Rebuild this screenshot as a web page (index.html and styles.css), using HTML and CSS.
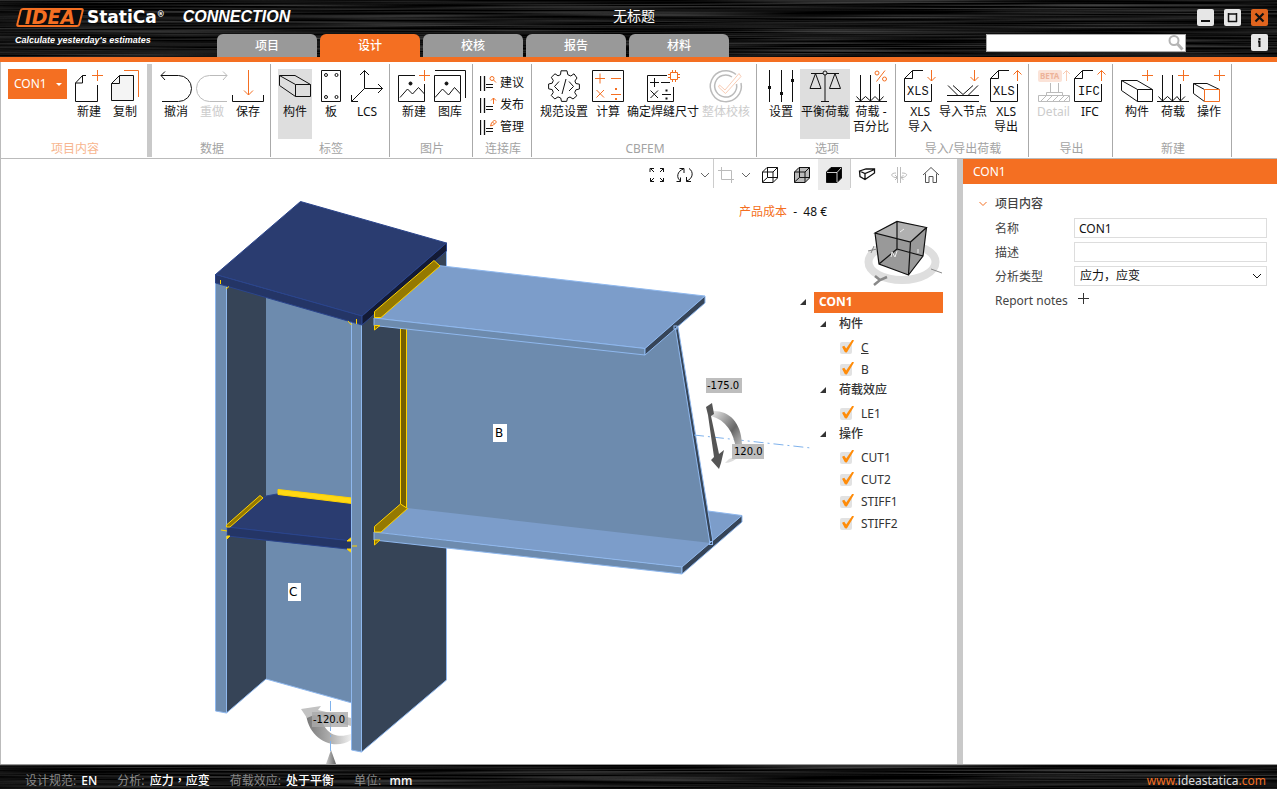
FILE: index.html
```html
<!DOCTYPE html>
<html lang="zh-Hans">
<head>
    <meta charset="UTF-8">
    <meta name="viewport" content="width=device-width, initial-scale=1.0">
    <title>无标题</title>
    <link rel="stylesheet" href="styles.css">
</head>
<body>

    <!-- Header -->
    <header class="header">
        <svg class="brushed" aria-hidden="true">
            <filter id="brush" x="0" y="0" width="100%" height="100%" color-interpolation-filters="sRGB">
                <feTurbulence type="fractalNoise" baseFrequency="0.004 0.6" numOctaves="2" seed="4"/>
                <feColorMatrix values="0.5 0 0 0 -0.17  0.5 0 0 0 -0.17  0.5 0 0 0 -0.17  0 0 0 0 1"/>
            </filter>
            <rect width="100%" height="100%" filter="url(#brush)"/>
        </svg>
        <div class="header-top">
            <div class="brand">
                <span class="logo-box">IDEA</span>
                <span class="logo-name">StatiCa<sup>®</sup></span>
                <span class="app-name">CONNECTION</span>
            </div>
            <div class="doc-title">无标题</div>
            <div class="window-buttons">
                <button class="win" aria-label="最小化"><svg viewBox="0 0 17 17"><path d="M4 12h9" stroke="#111" stroke-width="2"/></svg></button>
                <button class="win" aria-label="最大化"><svg viewBox="0 0 17 17"><path d="M4 5h9M4.5 4v9M12.5 4v9M4 12.5h9" stroke="#111" stroke-width="1.5" fill="none"/></svg></button>
                <button class="win close" aria-label="关闭"><svg viewBox="0 0 17 17"><path d="M4.5 4.5l8 8M12.5 4.5l-8 8" stroke="#111" stroke-width="2.2"/></svg></button>
            </div>
        </div>
        <div class="header-bottom">
            <div class="tagline">Calculate yesterday's estimates</div>
            <nav class="tabs">
                <button class="tab">项目</button>
                <button class="tab active">设计</button>
                <button class="tab">校核</button>
                <button class="tab">报告</button>
                <button class="tab">材料</button>
            </nav>
            <div class="search">
                <input type="text" aria-label="搜索">
                <svg viewBox="0 0 18 18"><circle cx="7" cy="6.5" r="4.5" fill="none" stroke="#b4b4b4" stroke-width="2"/><path d="M10.5 10l5 5.5" stroke="#b4b4b4" stroke-width="3"/></svg>
            </div>
            <button class="win info" aria-label="信息"><svg viewBox="0 0 17 17"><path d="M8.5 4v2M7 7.5h1.5V13" stroke="#111" stroke-width="2" fill="none"/></svg></button>
        </div>
    </header>

    <!-- Ribbon -->
    <div class="ribbon">
        <div class="group project">
            <div class="tools">
                <button class="con-select">CON1 <i class="caret"></i></button>
                <button class="tool"><svg viewBox="0 0 32 32"><path d="M13 5.5H9.5L2.5 13V31.5H24.5V15M9.5 5.5V13H2.5"/><path class="o" d="M19 5.5H30M24.5 0V11"/></svg>新建</button>
                <button class="tool"><svg viewBox="0 0 32 32"><path d="M10.5 5.5H24.5V30.5H2.5V13.5ZM10.5 5.5V13.5H2.5" fill="#f4f4f4"/><path class="o" d="M15 .5H29.5V27"/></svg>复制</button>
            </div>
            <div class="group-name">项目内容</div>
        </div>
        <div class="group">
            <div class="tools">
                <button class="tool"><svg viewBox="0 0 32 32"><path d="M1 5.5H18.5A13 13 0 0 1 18.5 31.5H2M5 1.5L1 5.5L5 10"/></svg>撤消</button>
                <button class="tool" disabled><svg viewBox="0 0 32 32"><path d="M31 5.5H13.5A13 13 0 0 0 13.5 31.5H31M27 1.5L31 5.5L27 10"/></svg>重做</button>
                <button class="tool"><svg viewBox="0 0 32 32"><path d="M.5 25V31.5H31.5V25"/><path class="o" d="M16.5 0V25M12 20.5L16.5 25L21 20.5"/></svg>保存</button>
            </div>
            <div class="group-name">数据</div>
        </div>
        <div class="group">
            <div class="tools">
                <button class="tool selected"><svg viewBox="0 0 32 32"><path d="M.5 5.5H16L31.5 14.5V26.5H16.5L.5 15.5ZM.5 5.5L16.5 14.5V26.5M16.5 14.5H31.5"/></svg>构件</button>
                <button class="tool"><svg viewBox="0 0 32 32"><path d="M6.5 .5H25.5V31.5H6.5Z"/><circle cx="11" cy="5" r="1.5"/><circle cx="21.5" cy="5" r="1.5"/><circle cx="11" cy="27" r="1.5"/><circle cx="21.5" cy="27" r="1.5"/></svg>板</button>
                <button class="tool"><svg viewBox="0 0 32 32"><path d="M13.5 .5V18.5H31.5M13.5 18.5L.5 31.5M9 5L13.5 .5L18 5M27 14L31.5 18.5L27 23M.5 25V31.5H7"/></svg>LCS</button>
            </div>
            <div class="group-name">标签</div>
        </div>
        <div class="group">
            <div class="tools">
                <button class="tool"><svg viewBox="0 0 32 32"><path d="M17 5.5H.5V31.5H26.5V14M2 27.5L9.5 19L14.5 24L20.5 17.5L26.5 24"/><circle class="dot" cx="12.5" cy="13.5" r="1.5"/><path class="o" d="M21 5.5H32M26.5 0V11"/></svg>新建</button>
                <button class="tool"><svg viewBox="0 0 32 32"><path d="M.5 5.5H26.5V31.5H.5ZM1 27.5L8.5 19L14.5 25L20.5 17.5L26.5 24M1 .5H31.5V28"/><circle class="dot" cx="12.5" cy="13.5" r="1.5"/></svg>图库</button>
            </div>
            <div class="group-name">图片</div>
        </div>
        <div class="group">
            <div class="tools list">
                <button class="line-tool"><svg viewBox="0 0 18 20"><path d="M.5 3V18M4.5 3V18" stroke-width="1.3"/><path d="M6 11.5H13M6 14.5H13"/><circle class="o" cx="12" cy="5.5" r="2"/><path class="o" d="M13.5 7L16 9.5"/></svg>建议</button>
                <button class="line-tool"><svg viewBox="0 0 18 20"><path d="M.5 3V18M4.5 3V18" stroke-width="1.3"/><path d="M6 11.5H13M6 14.5H13"/><path class="o" d="M13.5 9V3M11 5.5L13.5 3L16 5.5"/></svg>发布</button>
                <button class="line-tool"><svg viewBox="0 0 18 20"><path d="M.5 3V18M4.5 3V18" stroke-width="1.3"/><path d="M6 11.5H13M6 14.5H13"/><path class="o" d="M10.5 9L11.5 6L14.5 3L16.5 5L13.5 8ZM12.5 5L14.5 7"/></svg>管理</button>
            </div>
            <div class="group-name">连接库</div>
        </div>
        <div class="group">
            <div class="tools">
                <button class="tool"><svg viewBox="0 0 32 32"><path d="M13 .8H19L19.8 4.7L22.8 6L26 3.8L29 8L26.9 11L27.9 13.5L31.4 14.2V19L27.9 19.8L26.7 22.5L28.8 25.8L25 29L22 27L19.5 28L18.7 31.4H13.5L12.7 28L10 26.9L6.8 29L3.3 25.5L5.3 22.3L4.2 19.6L.6 18.8V14L4.2 13.2L5.3 10.5L3.3 7.3L7 3.8L10 5.8L12.5 4.7Z"/><path d="M11 11.5L6.5 16.5L11 21M21 11.5L25.5 16.5L21 21M18 9L14 24"/></svg>规范设置</button>
                <button class="tool"><svg viewBox="0 0 32 32"><path d="M.5 .5H31.5V31.5H.5Z"/><path class="o" d="M3 8.5H13M8 3.5V13.5M19 8.5H29M4.5 20L12 27.5M12 20L4.5 27.5M19 24.5H29"/><path class="o" d="M24 18V20M24 28V30" stroke-width="2"/></svg>计算</button>
                <button class="tool wide"><svg viewBox="0 0 32 32"><path d="M20 5.5H.5V31.5H26.5V17M3 12.5H12M7.5 8V17M14 12.5H23M3.5 20.5L11 28M11 20.5L3.5 28M15 24.5H24"/><path d="M19.5 19.5V21.5M19.5 27.5V29.5" stroke-width="2"/><path class="o" d="M23.5 2.5H30.5V9.5H23.5ZM25.5 0V2.5M28.5 0V2.5M25.5 9.5V12M28.5 9.5V12M21 4.5H23.5M21 7.5H23.5M30.5 4.5H33M30.5 7.5H33"/></svg>确定焊缝尺寸</button>
                <button class="tool" disabled><svg viewBox="0 0 32 32"><path d="M26 4.5A15.5 15.5 0 1 0 31 13M22 7A11 11 0 1 0 26.5 14" stroke-width="1.5"/><path class="faded" d="M9.5 15L15 20L29 3.5L31 6.5L15.5 23.5L8.5 17Z"/></svg>整体校核</button>
            </div>
            <div class="group-name">CBFEM</div>
        </div>
        <div class="group">
            <div class="tools">
                <button class="tool"><svg viewBox="0 0 32 32"><path d="M4.5 0V32M16.5 0V32M27.5 0V32"/><path d="M3 17.5H6M15 23.5H18M26 10.5H29" stroke-width="3"/></svg>设置</button>
                <button class="tool selected"><svg viewBox="0 0 32 32"><circle cx="16" cy="3" r="2"/><path d="M2 3.5H14M18 3.5H30M16 5V31.5M12 31.5H20M6.5 3.5L1 18.5H12ZM26 3.5L20.5 18.5H31.5Z"/></svg>平衡荷载</button>
                <button class="tool"><svg viewBox="0 0 32 32"><path d="M5.5 5V31M15.5 5V31M24.5 14V31M0 31.5H32M1.5 26.5L5.5 31L10.5 26.5L15.5 31L20 26.5L24.5 31L28.5 26.5"/><circle class="o" cx="22" cy="3" r="2"/><circle class="o" cx="29.5" cy="9" r="2"/><path class="o" d="M30 .5L21.5 11.5"/></svg>荷载 -<br>百分比</button>
            </div>
            <div class="group-name">选项</div>
        </div>
        <div class="group">
            <div class="tools">
                <button class="tool"><svg viewBox="0 0 32 32"><path d="M19 .5H8.5L.5 8.5V31.5H27.5V14M8.5 .5V8.5H.5"/><path class="o" d="M27.5 0V11M23.5 7L27.5 11L31.5 7"/><text x="3" y="25">XLS</text></svg>XLS<br>导入</button>
                <button class="tool wide"><svg viewBox="0 0 32 32"><path d="M0 25.5H32M0 31.5H32M1 15.5L11 25.5M6 15.5L16 24.5L26 15.5M31 15.5L21 25.5"/><path class="o" d="M27.5 0V11M23.5 7L27.5 11L31.5 7"/></svg>导入节点</button>
                <button class="tool"><svg viewBox="0 0 32 32"><path d="M19 .5H8.5L.5 8.5V31.5H27.5V14M8.5 .5V8.5H.5"/><path class="o" d="M27.5 11V.5M23.5 4.5L27.5 .5L31.5 4.5"/><text x="3" y="25">XLS</text></svg>XLS<br>导出</button>
            </div>
            <div class="group-name">导入/导出荷载</div>
        </div>
        <div class="group">
            <div class="tools">
                <button class="tool" disabled><svg viewBox="0 0 32 32"><path d="M12.5 13V22.5M20.5 13V22.5M8.5 25V22.5H24.5V25M.5 25.5H31.5V31.5H.5ZM3 31L8 26M9 31L14 26M15 31L20 26M21 31L26 26M26 31L31 26"/><rect class="badge" x="0" y="0" width="24" height="12" rx="2"/><text class="beta" x="2" y="9">BETA</text><path class="faded" d="M28.5 11V.5M25 4L28.5 .5L32 4"/></svg>Detail</button>
                <button class="tool"><svg viewBox="0 0 32 32"><path d="M19 .5H8.5L.5 8.5V31.5H27.5V14M8.5 .5V8.5H.5"/><path class="o" d="M27.5 11V.5M23.5 4.5L27.5 .5L31.5 4.5"/><text x="4" y="25">IFC</text></svg>IFC</button>
            </div>
            <div class="group-name">导出</div>
        </div>
        <div class="group">
            <div class="tools">
                <button class="tool"><svg viewBox="0 0 32 32"><path d="M.5 10.5H16L31.5 19.5V31.5H16.5L.5 20.5ZM.5 10.5L16.5 19.5V31.5M16.5 19.5H31.5"/><path class="o" d="M21 5.5H32M26.5 0V11"/></svg>构件</button>
                <button class="tool"><svg viewBox="0 0 32 32"><path d="M5.5 5V31M15.5 5V31M23.5 14V31M0 31.5H32M1.5 26.5L5.5 31L10.5 26.5L15.5 31L20 26.5L23.5 31L28 26.5"/><path class="o" d="M21 5.5H32M26.5 0V11"/></svg>荷载</button>
                <button class="tool"><svg viewBox="0 0 32 32"><path d="M11.5 31.5L.5 23.5V13.5H14L26.5 19.5M.5 13.5L11.5 19.5"/><path class="o" d="M11.5 19.5H26.5V31.5H11.5ZM21 5.5H32M26.5 0V11"/></svg>操作</button>
            </div>
            <div class="group-name">新建</div>
        </div>
    </div>

    <!-- Workspace -->
    <main class="workspace">
        <section class="viewport">
            <svg class="scene" viewBox="1 159 956 605" preserveAspectRatio="xMinYMin slice">
                <defs>
                    <linearGradient id="arc" x1="0" x2="1" y1="0" y2="1"><stop offset="0" stop-color="#eee"/><stop offset=".6" stop-color="#666"/><stop offset="1" stop-color="#ccc"/></linearGradient>
                    <linearGradient id="arc2" x1="0" x2="1"><stop offset="0" stop-color="#777"/><stop offset=".5" stop-color="#aaa"/><stop offset="1" stop-color="#eee"/></linearGradient>
                    <linearGradient id="cone"><stop offset="0" stop-color="#ccc"/><stop offset="1" stop-color="#666"/></linearGradient>
                </defs>
                <!-- column -->
                <polygon class="light" points="266,290 352,312 352,703 266,679"/>
                <polygon class="dark" points="226.5,284 266,290 266,679 226.5,713"/>
                <path class="edge" d="M266 679L352 703M226.5 713L266 679"/>
                <polygon class="light line" points="215.5,280 226.5,284 226.5,713 215.5,711"/>
                <polygon class="dark line" points="361.5,320 446.5,248 446.5,680 361.5,752"/>
                <!-- stiffener inside the column -->
                <polygon class="plate" points="227,527 266,496 277,494 352,502 352,541"/>
                <polygon class="plate-front" points="227,527 352,541 352,549.5 227,536"/>
                <polygon class="weld bright" points="278,489.5 352,498 352,503.5 278,494.5"/>
                <polygon class="weld" points="226.5,525 260,495.5 263,498 230,527 226.5,527"/>
                <path class="weld bright" d="M221 530L227 531M227 536H230L227 539ZM347 541L352 537V541ZM347 549H352V553Z"/>
                <polygon class="light line" points="351.5,318 361.5,322 361.5,752 351.5,750"/>
                <path class="weld" d="M352 546H357"/>
                <!-- cap plate -->
                <polygon class="plate" points="300.5,201.5 446.5,243 362,316 215.5,274.5"/>
                <polygon class="plate-front" points="215.5,274.5 362,316 362,325 215.5,283"/>
                <polygon class="plate-side" points="362,316 446.5,243 446.5,251 362,325"/>
                <path class="weld" d="M220.5 280V284M356.5 319V324M226 289L229 286.5M348 321L351.5 325"/>
                <!-- beam -->
                <polygon class="top" points="407,508 430,500 708,511 742,515.5 682,567 374,532"/>
                <polygon class="light" points="407,325 645,345 675,325 711,543 407,508"/>
                <path class="edge" d="M708 511L742 515.5"/>
                <polygon class="dark line" points="675,326 678,327 713,542 710,544"/>
                <polygon class="light line" points="374,532 682,567 682,574 374,540"/>
                <polygon class="dark line" points="682,567 742,515.5 742,522 682,574"/>
                <polygon class="weld deep" points="400.5,322 406.5,322 406.5,509 400.5,504"/>
                <polygon class="top line" points="438,265.5 705,296 645,348.5 374,318"/>
                <polygon class="light line" points="374,318 645,348.5 645,355 374,325.5"/>
                <polygon class="dark line" points="645,348.5 705,296 705,303 645,355"/>
                <polygon class="weld" points="374.5,311.5 434,260.5 440,266 381,317.5 374.5,317.5"/>
                <polygon class="weld" points="374.5,526.5 400.5,504 407.5,508.5 381,532 374.5,532"/>
                <path class="weld" d="M374.5 325.5H380L374.5 330ZM374.5 540H380L374.5 545Z"/>
                <rect class="edge" x="674" y="326" width="3" height="3"/>
                <rect class="edge" x="709.5" y="541.5" width="3" height="3"/>
                <!-- member axes -->
                <path class="axis" d="M694 435L811 448"/>
                <!-- load arrows -->
                <path d="M712 411C728 410 741 421 742 444L736 449C734 433 726 420 711 416Z" fill="url(#arc)"/>
                <path d="M739 456Q733 463 725 463L729 459Q735 457 738 453Z" fill="#ddd"/>
                <path d="M706 407L712 403L714 414L711 416L719 454L724 450L721 463L719 469L711 460L714 457L708 415Z" fill="#555"/>
                <path d="M306 712C307 738 333 752 351 740V734C336 739 323 734 320 712Z" fill="url(#arc2)"/>
                <path d="M301 709L321 706L318 710L351 718V726L314 715L307 718Z" fill="#c2c2c2"/>
                <polygon points="331,750 326,764 336,764" fill="url(#cone)"/>
                <path class="axis" d="M330.5 701V752"/>
                <rect x="706" y="378" width="36" height="15" fill="#bebebe"/><text class="value" x="707" y="389">-175.0</text>
                <rect x="732" y="444" width="32" height="15" fill="#bebebe"/><text class="value" x="734" y="455">120.0</text>
                <rect x="312" y="712" width="36" height="15" fill="#aaa" fill-opacity=".8"/><text class="value" x="313" y="723">-120.0</text>
                <rect x="493" y="424" width="14" height="18" fill="#fff"/><text class="member" x="495" y="437">B</text>
                <rect x="288" y="583" width="13" height="18" fill="#fff"/><text class="member" x="289" y="596">C</text>
                <!-- view cube -->
                <ellipse cx="902" cy="262" rx="33.5" ry="18" fill="none" stroke="#dedede" stroke-width="8"/>
                <polygon points="875,233 897,221.5 926.5,227.5 923,256 908.5,275 879,264" fill="#999"/>
                <polygon points="875,233 897,221.5 926.5,227.5 910.5,242" fill="#b0b0b0"/>
                <path d="M875 233L897 221.5L926.5 227.5L910.5 242ZM875 233L879 264L908.5 275L910.5 242M926.5 227.5L923 256L908.5 275M897 221.5V249L879 264M897 249L923 256" fill="none" stroke="#111" stroke-width="1.2"/>
                <path d="M900 232L904 229M891 257L892 252L895 257L897 251M918 249V253" stroke="#eee" fill="none"/>
                <path d="M868 251L877 249M874 246L871 253M931 269L942 273" stroke="#888" fill="none"/>
                <path d="M874 285L880 280L887 277M875 276L880 280" stroke="#888" stroke-width="2.5" fill="none"/>
            </svg>

            <div class="view-tools">
                <button class="view" aria-label="适合窗口"><svg viewBox="0 0 18 18"><path d="M2 6V2.5H6M2.5 2.5L6 6M12 2.5H15.5V6M15.5 2.5L12 6M2.5 12V15.5H6M2.5 15.5L6 12M12 15.5H15.5V12M15.5 15.5L12 12"/></svg></button>
                <button class="view mid" aria-label="旋转"><svg viewBox="0 0 18 18"><path d="M4.5 15C0 12 1 5 7.500 3M3.500 2.500H8V7M10.500 15C17 13 18 5.500 13 2.500M15 15.500H10.500V11M.5 15.500H4.500V11.500"/></svg></button>
                <button class="view small" aria-label="旋转选项"><svg viewBox="0 0 18 18"><path class="chev" d="M5 7L9 11L13 7"/></svg></button>
                <i class="sep"></i>
                <button class="view mid" aria-label="裁剪"><svg viewBox="0 0 18 18"><path d="M4.5 1V13.5H17M1 4.5H14.5V17" stroke="#bbb"/></svg></button>
                <button class="view small" aria-label="裁剪选项"><svg viewBox="0 0 18 18"><path class="chev" d="M5 7L9 11L13 7"/></svg></button>
                <button class="view" aria-label="线框"><svg viewBox="0 0 18 18"><path d="M1.5 6L6 1.5H16.5L12 6ZM1.5 6V16.5H12V6M16.5 1.5V12L12 16.5M6.5 2V11.5L1.5 16M6.5 11.5H16"/></svg></button>
                <button class="view" aria-label="透明"><svg viewBox="0 0 18 18"><path d="M1.5 6L6 1.5H16.5V12L12 16.5H1.5Z" fill="#bbb"/><path d="M1.5 6H12L16.5 1.5M12 6V16.5M6.5 2V11.5L1.5 16M6.5 11.5H16"/></svg></button>
                <button class="view on" aria-label="实体"><svg viewBox="0 0 18 18"><path d="M1.5 6L6 1.5H16.5V12L12 16.5H1.5Z" fill="#000"/><path d="M2 6.5H12V16M12 6.5L16 2" stroke="#fff" stroke-width=".8"/></svg></button>
                <i class="sep"></i>
                <button class="view" aria-label="截面"><svg viewBox="0 0 18 18"><path d="M1.500 5L8 3H16.500V7L7 13.500L2 10.500ZM1.500 5L7 7.500L16.500 3.500M7 7.500V13.500" stroke-width="1.3"/></svg></button>
                <button class="view" aria-label="镜像"><svg viewBox="0 0 18 18"><path d="M7.5 1V17M10.5 1V17M6 7C1 7 0 10 5 11.5H7.500M12 7C18 7 18 10 13 11.5H11M5 9L7.500 11.5L5 14M13.500 9L11 11.5L13.500 14" stroke="#bbb"/></svg></button>
                <button class="view" aria-label="主视图"><svg viewBox="0 0 18 18"><path d="M1 9L9 1.5L17 9M3.5 7.5V16.5H7V10.5H11V16.5H14.5V7.5" stroke="#555"/></svg></button>
            </div>
            <div class="cost"><span>产品成本</span> &nbsp;-&nbsp; 48 €</div>

            <ul class="tree">
                <li class="root"><i class="arrow"></i><strong>CON1</strong></li>
                <li class="branch"><i class="arrow"></i>构件</li>
                <li class="leaf"><input type="checkbox" id="c" checked><label for="c"><u>C</u></label></li>
                <li class="leaf"><input type="checkbox" id="b" checked><label for="b">B</label></li>
                <li class="branch"><i class="arrow"></i>荷载效应</li>
                <li class="leaf"><input type="checkbox" id="le1" checked><label for="le1">LE1</label></li>
                <li class="branch"><i class="arrow"></i>操作</li>
                <li class="leaf"><input type="checkbox" id="cut1" checked><label for="cut1">CUT1</label></li>
                <li class="leaf"><input type="checkbox" id="cut2" checked><label for="cut2">CUT2</label></li>
                <li class="leaf"><input type="checkbox" id="stiff1" checked><label for="stiff1">STIFF1</label></li>
                <li class="leaf"><input type="checkbox" id="stiff2" checked><label for="stiff2">STIFF2</label></li>
            </ul>
        </section>

        <!-- Properties -->
        <aside class="panel">
            <h2>CON1</h2>
            <form class="props">
                <h3><svg viewBox="0 0 10 10"><path d="M1.5 3L5 6.5L8.5 3"/></svg>项目内容</h3>
                <div class="row"><label for="name">名称</label><input type="text" id="name" value="CON1"></div>
                <div class="row"><label for="desc">描述</label><input type="text" id="desc"></div>
                <div class="row">
                    <label for="type">分析类型</label>
                    <div class="select">
                        <select id="type"><option>应力，应变</option></select>
                        <svg viewBox="0 0 10 10"><path d="M1 3L5 7L9 3"/></svg>
                    </div>
                </div>
                <div class="row"><label for="notes">Report notes</label><button type="button" id="notes" class="plus"><svg viewBox="0 0 11 11"><path d="M0 5.5H11M5.5 0V11"/></svg></button></div>
            </form>
        </aside>
    </main>

    <!-- Status bar -->
    <footer class="footer">
        <svg class="brushed" aria-hidden="true"><rect width="100%" height="100%" filter="url(#brush)"/></svg>
        <div class="status">
            <span>设计规范: <b>EN</b></span>
            <span>分析: <b lang="zh-Hant">应力，应变</b></span>
            <span>荷载效应: <b>处于平衡</b></span>
            <span>单位: &nbsp;<b>mm</b></span>
        </div>
        <a class="site" href="#">www.<span>ideastatica</span>.com</a>
    </footer>

</body>
</html>
```

FILE: styles.css
```css
* { box-sizing: border-box; }
body { margin: 0; min-height: 100vh; display: flex; flex-direction: column; font-family: "Noto Sans", "Noto Sans CJK SC", sans-serif; font-size: 12px; line-height: 16px; color: #111; background: #fff; }
button, input, select { font: inherit; color: inherit; }
button { border: none; padding: 0; background: none; }

/* header */
.header { position: relative; border-bottom: 5px solid #f46f22; background: #0c0d0e; color: #fff; }
.brushed { position: absolute; left: 0; top: 0; width: 100%; height: 100%; }
.header-top, .header-bottom { position: relative; display: flex; padding-right: 9px; }
.header-top { height: 34px; display: grid; grid-template-columns: 1fr auto 1fr; }
.header-bottom { height: 23px; }
.brand { display: flex; align-items: center; padding-left: 18px; }
.logo-box { position: relative; z-index: 0; width: 64px; height: 19px; line-height: 19px; text-align: center; font-family: "DejaVu Sans", sans-serif; font-size: 19px; font-weight: bold; font-style: italic; color: #f46f22; }
.logo-box::before { content: ""; position: absolute; z-index: -1; inset: 0; border: 2px solid #f46f22; border-radius: 3px; background: #0c0d0e; transform: skewX(-14deg); }
.logo-name { margin-left: 5px; font-family: "DejaVu Sans", sans-serif; font-size: 17px; font-weight: bold; }
.logo-name sup { font-size: 8px; line-height: 8px; vertical-align: 6px; }
.app-name { margin-left: 18px; font-family: "Liberation Sans", sans-serif; font-size: 16px; font-weight: bold; font-style: italic; }
.doc-title { line-height: 32px; font-size: 14px; }
.window-buttons { display: flex; justify-content: flex-end; gap: 10px; padding-top: 9px; }
.win { width: 17px; height: 17px; border-radius: 2px; background: #e6e6e6; }
.win svg { display: block; }
.close { background: #e0641e; }
.tagline { width: 217px; padding-left: 15px; line-height: 12px; font-family: "Liberation Sans", sans-serif; font-size: 9px; font-weight: bold; font-style: italic; }
.tabs { display: flex; gap: 3px; flex: 1; }
.tab { width: 100px; border-radius: 6px 6px 0 0; background: #999; color: #fff; font-weight: 500; }
.tab.active { background: #f46f22; }
.search { position: relative; width: 200px; height: 18px; margin-right: 65px; }
.search input { width: 100%; height: 18px; border: 1px solid #aaa; background: #fff; color: #111; }
.search svg { position: absolute; right: 1px; top: 0; width: 18px; }

/* ribbon */
.ribbon { display: flex; height: 97px; padding: 2px 0 1px; border-bottom: 1px solid #bbb; border-left: 1px solid #bbb; }
.group { display: flex; flex-direction: column; justify-content: space-between; padding: 5px 5px 0 7px; border-right: 1px solid #aaa; }
.group.project { border-right: 5px solid #c9c9c9; }
.tools { display: flex; gap: 2px; }
.tool { display: flex; flex-direction: column; align-items: center; min-width: 34px; height: 70px; padding: 1px 1px 0; line-height: 15px; text-align: center; white-space: nowrap; }
.tool svg { width: 32px; height: 32px; margin-bottom: 2px; overflow: visible; }
.tool.wide { padding: 1px 0 0; }
.tool.selected { background: #dedede; }
.tool:disabled { color: #ccc; }
.tool svg, .line-tool svg, .view svg, .props svg { fill: none; stroke: #111; }
.tool:disabled svg { stroke: #bbb; }
.tool svg .o, .line-tool svg .o { stroke: #f46f22; }
.tool .dot { fill: #111; }
.tool .faded { stroke: #f9cdb6; }
.tool .badge { fill: #fbe3d8; stroke: none; }
.tool text { fill: #111; stroke: none; font-family: "Liberation Mono", monospace; font-size: 12px; }
.tool .beta { fill: #edb39a; font-family: "Noto Sans", sans-serif; font-size: 8px; font-weight: bold; }
.con-select { display: flex; align-items: center; justify-content: space-between; width: 59px; height: 30px; margin-right: 3px; padding: 0 5px 0 6px; background: #f46f22; color: #fff; }
.caret { border: 3px solid transparent; border-top-color: #fff; border-bottom: 0; }
.list { flex-direction: column; gap: 0; padding: 3px 2px 0 0; }
.line-tool { display: flex; align-items: center; height: 22px; gap: 2px; }
.line-tool svg { width: 18px; height: 20px; }
.group-name { text-align: center; color: #a3a3a3; }
.project .group-name { color: #f7b58e; }

/* workspace */
.workspace { flex: 1; display: flex; border-left: 1px solid #bbb; }
.viewport { position: relative; flex: 1; min-width: 0; border-right: 6px solid #c9c9c9; }
.scene { display: block; width: 100%; }
.light { fill: #6d8bae; }
.dark { fill: #364457; }
.top { fill: #7c9dca; }
.line { stroke: #8fb8ee; }
.edge { fill: none; stroke: #8fb8ee; }
.plate { fill: #2a3c70; stroke: #2b458c; }
.plate-front { fill: #243566; stroke: #2b458c; }
.plate-side { fill: #131a35; stroke: #2b458c; }
.weld { fill: #957900; stroke: #ffd200; }
.weld.deep { fill: #765f00; }
.weld.bright { fill: #ffd814; }
.axis { fill: none; stroke: #7fb2ec; stroke-dasharray: 10 4 2 4; }
.value { font-family: "DejaVu Sans", sans-serif; font-size: 10px; }
.member { font-family: "DejaVu Sans", sans-serif; font-size: 12px; }

.view-tools { position: absolute; top: 0; right: 10px; display: flex; height: 31px; }
.view { width: 32px; height: 31px; display: flex; align-items: center; justify-content: center; }
.view svg { width: 18px; height: 18px; flex: none; }
.view.mid { width: 24px; }
.view.small { width: 16px; }
.view.on { background: #ebebeb; }
.view .chev { stroke: #666; }
.sep { width: 1px; height: 29px; background: #ccc; }
.cost { position: absolute; top: 45px; right: 130px; }
.cost span { color: #f46f22; }

.tree { position: absolute; top: 132px; right: 14px; width: 143px; margin: 0; padding: 0; list-style: none; line-height: 22px; color: #333; }
.tree li { display: flex; align-items: center; height: 22px; }
.tree strong { flex: 1; height: 21px; line-height: 20px; padding-left: 5px; background: #f46f22; color: #fff; }
.tree .branch { padding-left: 20px; font-weight: 500; }
.tree .leaf { padding: 3px 0 0 40px; gap: 9px; }
.arrow { width: 6px; height: 6px; margin-right: 8px; background: #333; clip-path: polygon(100% 0, 100% 100%, 0 100%); }
.branch .arrow { margin-right: 13px; }
.leaf input { appearance: none; position: relative; width: 12px; height: 12px; margin: 0; border-radius: 2px; background: #e2e2e2; }
.leaf input:checked::after { content: ""; position: absolute; left: 1px; top: -2px; width: 13px; height: 13px; background: #ff8c0a; clip-path: polygon(8% 55%, 25% 48%, 40% 70%, 88% 0, 100% 8%, 45% 100%, 30% 98%); }

/* properties */
.panel { width: 314px; }
.panel h2 { margin: 0; padding-left: 10px; font-size: 12px; font-weight: normal; line-height: 25px; background: #f46f22; color: #fff; }
.props { padding: 7px 10px 0 15px; color: #444; }
.props h3 { display: flex; align-items: center; margin: 0; height: 25px; font-size: 12px; font-weight: 500; }
.props h3 svg { width: 10px; margin-right: 7px; stroke: #f46f22; }
.row { display: flex; align-items: center; height: 24px; padding-left: 17px; }
.row label { width: 79px; padding-top: 1px; }
.row input, .select { flex: 1; min-width: 0; height: 20px; border: 1px solid #ddd; color: #111; }
.row input { padding: 0 4px; }
.select { position: relative; }
.select select { width: 100%; height: 18px; padding: 0 5px; border: none; background: none; appearance: none; }
.select svg { position: absolute; right: 4px; top: 4px; width: 10px; height: 10px; pointer-events: none; }
.plus { margin-left: 4px; height: 16px; }
.plus svg { width: 11px; height: 11px; stroke: #333; }

/* status bar */
.footer { position: relative; display: flex; justify-content: space-between; height: 25px; padding: 8px 11px 0 25px; border-top: 1px solid #999; background: #0c0d0e; color: #888; }
.status { position: relative; display: flex; gap: 20px; }
.status b { margin-left: 2px; font-family: "Noto Sans", "Noto Sans CJK TC", sans-serif; font-weight: 500; color: #fff; }
.site { position: relative; color: #f46f22; text-decoration: none; }
.site span { color: #ddd; }
```
